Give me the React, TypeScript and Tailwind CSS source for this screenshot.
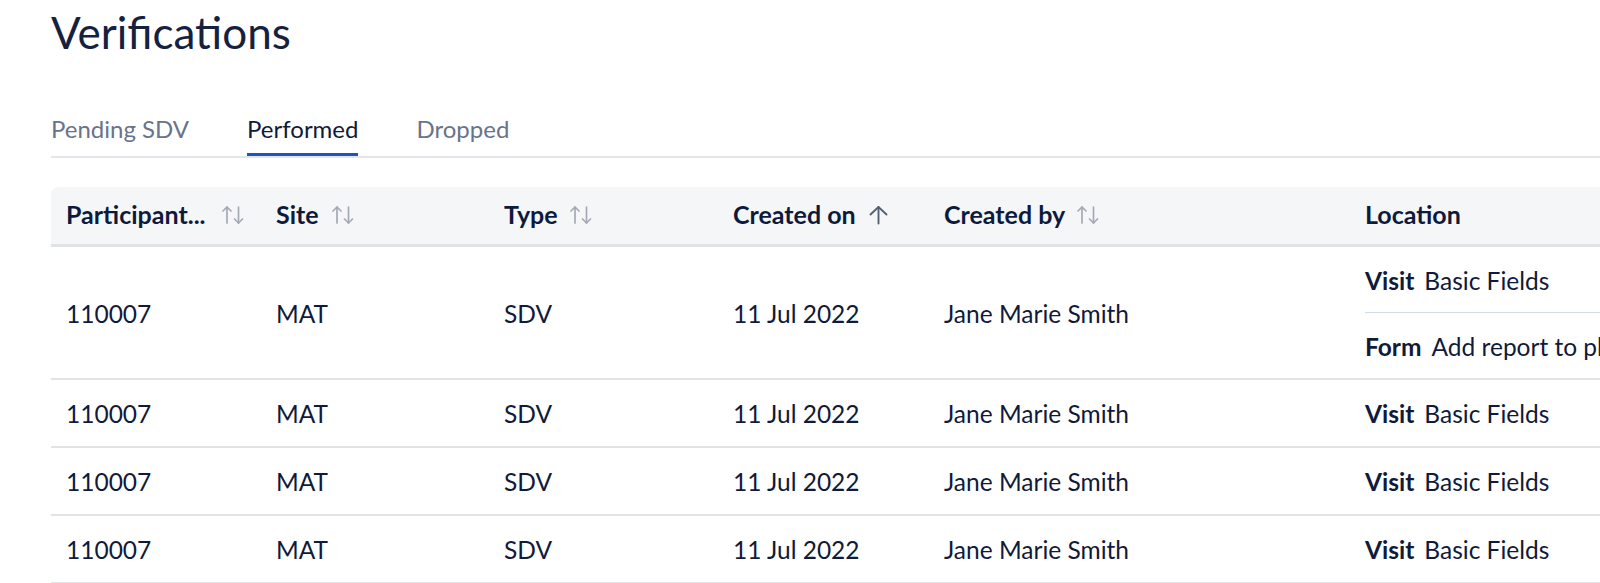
import React from "react";

const SortIcon = () => (
  <svg width="24" height="20" viewBox="0 0 24 20" fill="none" stroke="#a4a9b6" strokeWidth="1.7" strokeLinecap="round" strokeLinejoin="round" className="shrink-0">
    <path d="M6 18V2" />
    <path d="M2 6l4-4 4 4" />
    <path d="M17.5 2v16" />
    <path d="M13.5 14l4 4 4-4" />
  </svg>
);

const UpIcon = () => (
  <svg width="19" height="20" viewBox="0 0 19 20" fill="none" stroke="#566074" strokeWidth="1.9" strokeLinecap="round" strokeLinejoin="round" className="shrink-0">
    <path d="M9.5 18.5V2" />
    <path d="M1.5 9.5l8-7.5 8 7.5" />
  </svg>
);

const cols = "grid grid-cols-[210px_228px_229px_211px_421px_700px]";

const rows = [
  { multi: true },
  { multi: false },
  { multi: false },
  { multi: false },
];

export default function App() {
  return (
    <div className="w-[1600px] h-[583px] overflow-hidden bg-white font-['Lato',sans-serif]">
      <div className="pl-[51px] w-[2000px]">
        <h1 className="pt-[6px] text-[44px] leading-[1.2] font-normal text-[#15213f]">Verifications</h1>

        <div className="mt-[56px] flex gap-[58px] border-b-2 border-[#e3e5ea]">
          <div className="pb-[9px] border-b-[3px] border-transparent text-[24px] leading-[1.2] text-[#69738a]">Pending SDV</div>
          <div className="pb-[9px] border-b-[3px] border-[#1c55c0] text-[24px] leading-[1.2] text-[#101a3a]">Performed</div>
          <div className="pb-[9px] border-b-[3px] border-transparent text-[24px] leading-[1.2] text-[#69738a]">Dropped</div>
        </div>

        <div className="mt-[29px]">
          <div className={`${cols} h-[60px] bg-[#f5f6f8] border-b-[3px] border-[#e1e3e8] rounded-tl-[8px] text-[25px] font-bold text-[#0e1a3c]`}>
            <div className="px-[15px] flex items-center gap-[15px]"><span>Participant...</span><SortIcon /></div>
            <div className="px-[15px] flex items-center gap-[12px]"><span>Site</span><SortIcon /></div>
            <div className="px-[15px] flex items-center gap-[11px]"><span>Type</span><SortIcon /></div>
            <div className="px-[15px] flex items-center gap-[13px]"><span>Created on</span><UpIcon /></div>
            <div className="px-[15px] flex items-center gap-[11px]"><span>Created by</span><SortIcon /></div>
            <div className="px-[15px] flex items-center"><span>Location</span></div>
          </div>

          {rows.map((r, i) => (
            <div
              key={i}
              className={`${cols} ${r.multi ? "h-[133px]" : "h-[68px]"} border-b-2 border-[#e2e3e7] text-[24.5px] leading-[36px] text-[#101a3a]`}
            >
              <div className="px-[15px] pt-[3px] flex items-center">110007</div>
              <div className="px-[15px] pt-[3px] flex items-center">MAT</div>
              <div className="px-[15px] pt-[3px] flex items-center">SDV</div>
              <div className="px-[15px] pt-[3px] flex items-center">11 Jul 2022</div>
              <div className="px-[15px] pt-[3px] flex items-center">Jane Marie Smith</div>
              {r.multi ? (
                <div className="pl-[15px] flex flex-col">
                  <div className="h-[66px] pt-[4px] flex items-center gap-[10px] border-b border-[#d3dbe8]">
                    <span className="font-bold">Visit</span>
                    <span>Basic Fields</span>
                  </div>
                  <div className="h-[65px] pt-[4px] flex items-center gap-[10px] whitespace-nowrap">
                    <span className="font-bold">Form</span>
                    <span>Add report to physician summary</span>
                  </div>
                </div>
              ) : (
                <div className="px-[15px] pt-[3px] flex items-center gap-[10px]">
                  <span className="font-bold">Visit</span>
                  <span>Basic Fields</span>
                </div>
              )}
            </div>
          ))}
        </div>
      </div>
    </div>
  );
}
